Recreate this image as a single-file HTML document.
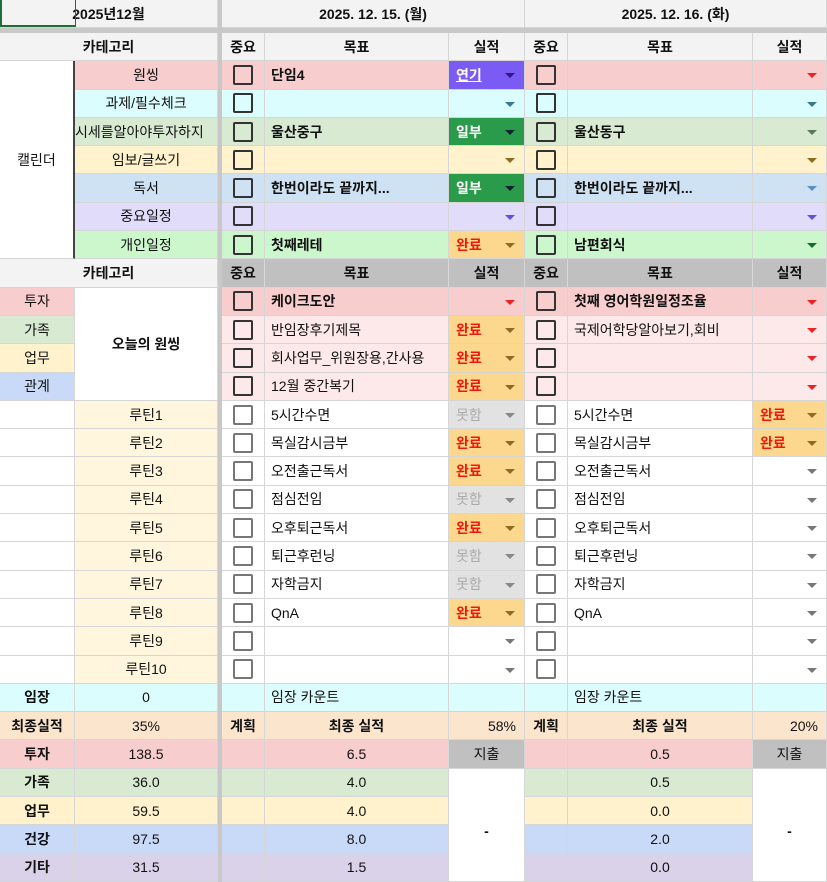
<!DOCTYPE html>
<html><head><meta charset="utf-8"><style>
*{box-sizing:border-box;margin:0;padding:0}
body{width:827px;height:882px;overflow:hidden;background:#fff;font-family:"Liberation Sans","Noto Sans CJK KR",sans-serif;font-size:14px;color:#111}
.g{display:grid;grid-template-columns:75px 143px 4px 43px 184px 76px 43px 185px 74px;grid-template-rows:28px 5px repeat(30,28.3px);width:827px;height:882px;position:relative}
.g>div{border-right:1px solid #d6d6d6;border-bottom:1px solid #d6d6d6;display:flex;align-items:center;justify-content:center;white-space:nowrap;overflow:hidden;position:relative}
.g>div.sp{background:#c8c8c8;border:none}
.b{font-weight:bold}
.l{justify-content:flex-start!important;padding-left:6px}
.h{background:#f3f3f3}
.gr{background:#c0c0c0}
.c2{grid-column:span 2}.c3{grid-column:span 3}
.cb::after{content:"";width:16px;height:16px;border:2px solid #333;border-radius:2px;display:block}
.cb2::after{content:"";width:16px;height:16px;border:2px solid #777;border-radius:2px;display:block}
.dd{justify-content:flex-start!important;padding-left:7px}
.dd::after{content:"";position:absolute;right:9px;top:12px;border-left:5px solid transparent;border-right:5px solid transparent;border-top:5px solid var(--t,#777)}
.ok{background:#fcd88f;color:#f0180c;font-weight:bold}
.ok{--t:#8a6d1e}
.no{background:#e2e2e2;color:#aaa;--t:#888}
.gn{background:#2a9a4b;color:#fff;font-weight:bold;--t:#123}
.pu{background:#7a5cf5;color:#fff;font-weight:bold;text-decoration:underline;--t:#2d1a8a}
.pk{background:#f8cdcd}.cy{background:#dcfdfe}.gg{background:#d9ead3}.yl{background:#fff2cc}.bl{background:#cfe2f3}.lv{background:#e2dcfb}.lg{background:#ccf7cc}
.lp{background:#fde9e9}.cr{background:#fff6dd}.bb{background:#c9daf8}.pe{background:#fce5cd}.pp{background:#d9d2e9}
</style></head><body><div class="g">
<div class="c2 b h">2025년12월</div><div class="sp"></div><div class="c3 b h">2025. 12. 15. (월)</div><div class="c3 b h">2025. 12. 16. (화)</div>
<div class="sp" style="grid-column:span 9"></div>
<div class="c2 b h">카테고리</div><div class="sp"></div><div class="b h">중요</div><div class="b h">목표</div><div class="b h">실적</div><div class="b h">중요</div><div class="b h">목표</div><div class="b h">실적</div>

<div style="grid-row:span 7;border-right:2px solid #444">캘린더</div>
<div class="pk">원씽</div><div class="sp"></div><div class="pk cb"></div><div class="pk l b">단임4</div><div class="dd pu">연기</div><div class="pk cb"></div><div class="pk"></div><div class="pk dd" style="--t:#e22"></div>
<div class="cy">과제/필수체크</div><div class="sp"></div><div class="cy cb"></div><div class="cy"></div><div class="cy dd" style="--t:#3a7790"></div><div class="cy cb"></div><div class="cy"></div><div class="cy dd" style="--t:#3a7790"></div>
<div class="gg" style="justify-content:flex-start">시세를알아야투자하지</div><div class="sp"></div><div class="gg cb"></div><div class="gg l b">울산중구</div><div class="dd gn">일부</div><div class="gg cb"></div><div class="gg l b">울산동구</div><div class="gg dd" style="--t:#587a58"></div>
<div class="yl">임보/글쓰기</div><div class="sp"></div><div class="yl cb"></div><div class="yl"></div><div class="yl dd" style="--t:#8a6d1e"></div><div class="yl cb"></div><div class="yl"></div><div class="yl dd" style="--t:#8a6d1e"></div>
<div class="bl">독서</div><div class="sp"></div><div class="bl cb"></div><div class="bl l b">한번이라도 끝까지...</div><div class="dd gn">일부</div><div class="bl cb"></div><div class="bl l b">한번이라도 끝까지...</div><div class="bl dd" style="--t:#5a8fc0"></div>
<div class="lv">중요일정</div><div class="sp"></div><div class="lv cb"></div><div class="lv"></div><div class="lv dd" style="--t:#6a4ce0"></div><div class="lv cb"></div><div class="lv"></div><div class="lv dd" style="--t:#6a4ce0"></div>
<div class="lg">개인일정</div><div class="sp"></div><div class="lg cb"></div><div class="lg l b">첫째레테</div><div class="dd ok">완료</div><div class="lg cb"></div><div class="lg l b">남편회식</div><div class="lg dd" style="--t:#1a6a2a"></div>

<div class="c2 b h">카테고리</div><div class="sp"></div><div class="b gr">중요</div><div class="b gr">목표</div><div class="b gr">실적</div><div class="b gr">중요</div><div class="b gr">목표</div><div class="b gr">실적</div>

<div class="pk">투자</div><div class="b" style="grid-row:span 4">오늘의 원씽</div><div class="sp"></div><div class="pk cb"></div><div class="pk l b">케이크도안</div><div class="pk dd" style="--t:#e22"></div><div class="pk cb"></div><div class="pk l b">첫째 영어학원일정조율</div><div class="pk dd" style="--t:#e22"></div>
<div class="gg">가족</div><div class="sp"></div><div class="lp cb"></div><div class="lp l">반임장후기제목</div><div class="dd ok">완료</div><div class="lp cb"></div><div class="lp l">국제어학당알아보기,회비</div><div class="lp dd" style="--t:#e22"></div>
<div class="yl">업무</div><div class="sp"></div><div class="lp cb"></div><div class="lp l">회사업무_위원장용,간사용</div><div class="dd ok">완료</div><div class="lp cb"></div><div class="lp"></div><div class="lp dd" style="--t:#e22"></div>
<div class="bb">관계</div><div class="sp"></div><div class="lp cb"></div><div class="lp l">12월 중간복기</div><div class="dd ok">완료</div><div class="lp cb"></div><div class="lp"></div><div class="lp dd" style="--t:#e22"></div>

<div></div><div class="cr">루틴1</div><div class="sp"></div><div class="cb2"></div><div class="l">5시간수면</div><div class="dd no">못함</div><div class="cb2"></div><div class="l">5시간수면</div><div class="dd ok">완료</div>
<div></div><div class="cr">루틴2</div><div class="sp"></div><div class="cb2"></div><div class="l">목실감시금부</div><div class="dd ok">완료</div><div class="cb2"></div><div class="l">목실감시금부</div><div class="dd ok">완료</div>
<div></div><div class="cr">루틴3</div><div class="sp"></div><div class="cb2"></div><div class="l">오전출근독서</div><div class="dd ok">완료</div><div class="cb2"></div><div class="l">오전출근독서</div><div class="dd"></div>
<div></div><div class="cr">루틴4</div><div class="sp"></div><div class="cb2"></div><div class="l">점심전임</div><div class="dd no">못함</div><div class="cb2"></div><div class="l">점심전임</div><div class="dd"></div>
<div></div><div class="cr">루틴5</div><div class="sp"></div><div class="cb2"></div><div class="l">오후퇴근독서</div><div class="dd ok">완료</div><div class="cb2"></div><div class="l">오후퇴근독서</div><div class="dd"></div>
<div></div><div class="cr">루틴6</div><div class="sp"></div><div class="cb2"></div><div class="l">퇴근후런닝</div><div class="dd no">못함</div><div class="cb2"></div><div class="l">퇴근후런닝</div><div class="dd"></div>
<div></div><div class="cr">루틴7</div><div class="sp"></div><div class="cb2"></div><div class="l">자학금지</div><div class="dd no">못함</div><div class="cb2"></div><div class="l">자학금지</div><div class="dd"></div>
<div></div><div class="cr">루틴8</div><div class="sp"></div><div class="cb2"></div><div class="l">QnA</div><div class="dd ok">완료</div><div class="cb2"></div><div class="l">QnA</div><div class="dd"></div>
<div></div><div class="cr">루틴9</div><div class="sp"></div><div class="cb2"></div><div></div><div class="dd"></div><div class="cb2"></div><div></div><div class="dd"></div>
<div></div><div class="cr">루틴10</div><div class="sp"></div><div class="cb2"></div><div></div><div class="dd"></div><div class="cb2"></div><div></div><div class="dd"></div>

<div class="cy b">임장</div><div class="cy">0</div><div class="sp"></div><div class="cy"></div><div class="cy l">임장 카운트</div><div class="cy"></div><div class="cy"></div><div class="cy l">임장 카운트</div><div class="cy"></div>
<div class="pe b">최종실적</div><div class="pe">35%</div><div class="sp"></div><div class="pe b">계획</div><div class="pe b">최종 실적</div><div class="pe" style="justify-content:flex-end;padding-right:8px">58%</div><div class="pe b">계획</div><div class="pe b">최종 실적</div><div class="pe" style="justify-content:flex-end;padding-right:8px">20%</div>
<div class="pk b">투자</div><div class="pk">138.5</div><div class="sp"></div><div class="pk"></div><div class="pk">6.5</div><div class="gr">지출</div><div class="pk"></div><div class="pk">0.5</div><div class="gr">지출</div>
<div class="gg b">가족</div><div class="gg">36.0</div><div class="sp"></div><div class="gg"></div><div class="gg">4.0</div><div style="grid-row:span 4;padding-top:12px" class="b">-</div><div class="gg"></div><div class="gg">0.5</div><div style="grid-row:span 4;padding-top:12px" class="b">-</div>
<div class="yl b">업무</div><div class="yl">59.5</div><div class="sp"></div><div class="yl"></div><div class="yl">4.0</div><div class="yl"></div><div class="yl">0.0</div>
<div class="bb b">건강</div><div class="bb">97.5</div><div class="sp"></div><div class="bb"></div><div class="bb">8.0</div><div class="bb"></div><div class="bb">2.0</div>
<div class="pp b">기타</div><div class="pp">31.5</div><div class="sp"></div><div class="pp"></div><div class="pp">1.5</div><div class="pp"></div><div class="pp">0.0</div>
<span style="position:absolute;left:0;top:0;width:76px;height:27px;border:2px solid #1e6e3a;border-top:none;border-right-width:1px"></span>
</div></body></html>
